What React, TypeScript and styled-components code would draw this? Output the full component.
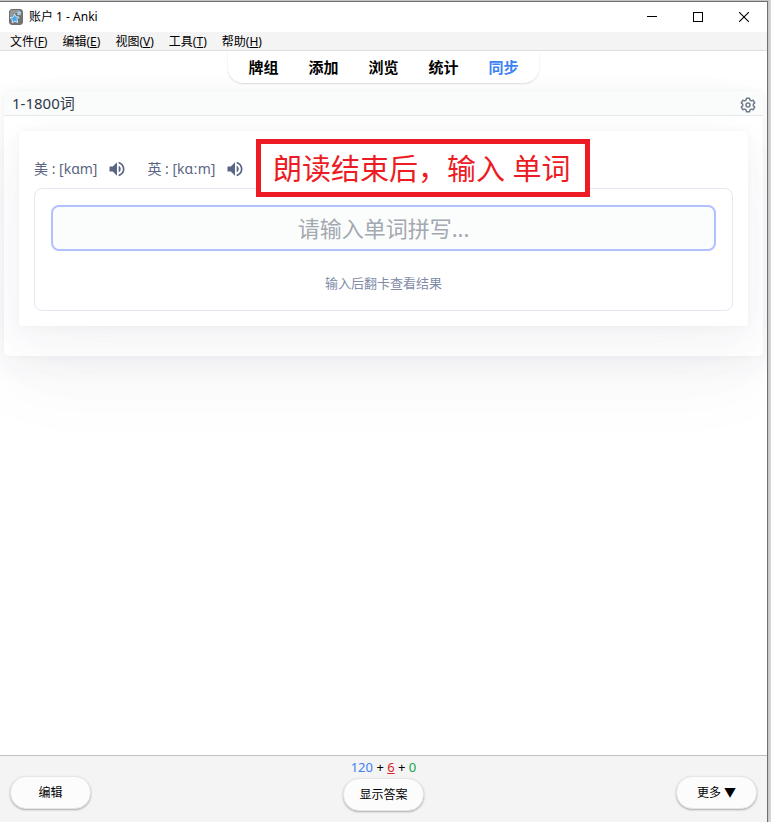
import React from "react";
import styled, { createGlobalStyle, css } from "styled-components";

const GlobalStyle = createGlobalStyle`
  *, *::before, *::after { box-sizing: border-box; }
  body {
    margin: 0;
    background: #cfcfcf;
    font-family: "Noto Sans", "Noto Sans CJK SC", sans-serif;
    color: #000;
  }
  button, input { font: inherit; color: inherit; }
`;

const Desktop = styled.div`
  min-height: 100vh;
  display: flex;
  padding: 1px 3px 0 0;
  background: linear-gradient(to left, #dcdcdc, #c4c4c4 3px);
`;

const AppWindow = styled.div`
  flex: 1;
  min-width: 0;
  display: flex;
  flex-direction: column;
  border: solid #707070;
  border-width: 1px 1px 0 0;
  background: #fff;
  overflow: hidden;
`;

const TitleBar = styled.header`
  display: flex;
  align-items: center;
  height: 30px;
  padding-left: 9px;
  background: #fff;
`;

const WindowTitle = styled.h1`
  flex: 1;
  margin: 0 0 0 6px;
  font-size: 12px;
  line-height: 30px;
  font-weight: 400;
`;

const CaptionButton = styled.button`
  display: grid;
  place-items: center;
  width: 46px;
  height: 30px;
  padding: 0;
  border: 0;
  background: none;
`;

const MenuBar = styled.nav`
  display: flex;
  align-items: flex-start;
  gap: 15px;
  height: 19px;
  padding-left: 10px;
  background: #f4f4f4;
  border-bottom: 1px solid #dfdfdf;
`;

const MenuItem = styled.button`
  padding: 0;
  border: 0;
  background: none;
  font-size: 12px;
  line-height: 20px;
  white-space: nowrap;
`;

const Toolbar = styled.nav`
  position: relative;
  align-self: center;
  display: flex;
  gap: 30px;
  height: 32px;
  padding: 0 20px;
  border-radius: 0 0 15px 15px;
  background: #fff;
  box-shadow: 0 1px 2px rgba(0, 0, 0, 0.14);
  clip-path: inset(0 -4px -4px -4px);
`;

const ToolbarLink = styled.a<{ $active?: boolean }>`
  font-size: 15px;
  line-height: 33px;
  font-weight: 700;
  text-decoration: none;
  color: ${(p) => (p.$active ? "#3b82f6" : "#000")};
`;

const Page = styled.main`
  flex: 1;
  padding: 8px 4px;
`;

const softShadow = css`
  box-shadow:
    0 0 6px rgba(50, 60, 93, 0.03),
    0 30px 80px rgba(50, 60, 93, 0.03),
    0 8px 30px rgba(50, 60, 93, 0.05);
`;

const DeckCard = styled.section`
  border-radius: 4px;
  background: #fff;
  ${softShadow}
`;

const DeckHeader = styled.div`
  display: flex;
  align-items: center;
  justify-content: space-between;
  height: 25px;
  padding: 0 7px 0 8px;
  border-bottom: 1px solid #e4e7ed;
  border-radius: 4px 4px 0 0;
  background: #fafcfc;
`;

const DeckName = styled.h2`
  margin: 0;
  font-size: 15px;
  line-height: 24px;
  font-weight: 400;
  color: #303846;
`;

const IconButton = styled.button`
  display: grid;
  place-items: center;
  padding: 0;
  border: 0;
  background: none;
`;

const SettingsButton = styled(IconButton)`
  padding-top: 4px;
  color: #70798a;
`;

const DeckBody = styled.div`
  padding: 15px 15px 30px;
`;

const Card = styled.article`
  padding: 24px 15px 15px;
  border-radius: 4px;
  background: #fff;
  ${softShadow}
`;

const Phonetics = styled.div`
  position: relative;
  display: flex;
  align-items: flex-start;
  gap: 20px;
  height: 33px;
  font-size: 14px;
  line-height: 28px;
  color: #5a6583;
`;

const Phonetic = styled.div`
  display: flex;
  align-items: center;
  gap: 10px;
  white-space: nowrap;
`;

const Callout = styled.div`
  position: absolute;
  left: 222px;
  top: -16px;
  padding: 1px 14px 0 12px;
  border: 5px solid #ed1c24;
  background: #fff;
  font-size: 29px;
  line-height: 47px;
  color: #ed1c24;
  white-space: nowrap;
`;

const AnswerPanel = styled.div`
  padding: 16px;
  border: 1px solid #e6e7f2;
  border-radius: 8px;
`;

const AnswerInput = styled.input`
  display: block;
  width: 100%;
  height: 46px;
  padding: 0 8px;
  border: 2px solid #b4c0fb;
  border-radius: 8px;
  outline: 0;
  background: #fbfdfc;
  font-size: 22px;
  text-align: center;
  color: #303846;
  &::placeholder { color: #a3a8b1; opacity: 1; }
`;

const Hint = styled.p`
  margin: 22px 0 0;
  padding-bottom: 1px;
  font-size: 13px;
  line-height: 20px;
  text-align: center;
  color: #7f8ba8;
`;

const BottomBar = styled.footer`
  display: grid;
  grid-template-columns: 1fr auto 1fr;
  align-items: start;
  height: 67px;
  padding: 0 10px;
  border-top: 1px solid #bfbfbf;
  background: #f4f4f4;
`;

const Side = styled.div<{ $end?: boolean }>`
  display: flex;
  justify-content: ${(p) => (p.$end ? "flex-end" : "flex-start")};
  padding-top: 20px;
`;

const Center = styled.div`
  display: flex;
  flex-direction: column;
  align-items: center;
`;

const Counts = styled.div`
  font-size: 13px;
  line-height: 22px;
`;

const Count = styled.span<{ $color: string }>`
  color: ${(p) => p.$color};
`;

const PillButton = styled.button`
  width: 81px;
  height: 33px;
  padding: 0;
  border: 1px solid #e6e6e6;
  border-radius: 16px;
  background: #fcfcfc;
  box-shadow: 0 1px 2px rgba(0, 0, 0, 0.3);
  font-size: 12px;
  line-height: 30px;
`;

const menus = [
  ["文件", "F"],
  ["编辑", "E"],
  ["视图", "V"],
  ["工具", "T"],
  ["帮助", "H"],
];

const links = ["牌组", "添加", "浏览", "统计", "同步"];

const phonetics = [
  ["美", "[kɑm]"],
  ["英", "[kɑːm]"],
];

function AppIcon() {
  return (
    <svg width="14" height="16" viewBox="0 0 14 16" aria-hidden="true">
      <rect x="0.5" y="0.5" width="13" height="15" rx="2.5" fill="#747474" stroke="#6e6e6e" />
      <path d="M1 3Q1 1 3 1H11L1 9Z" fill="#969696" />
      <path d="M5.6 5.2l1.5 2.6 3 .3-2 2.3.6 3-2.9-1.1-2.6 1.5.1-3-2.2-2.1 3-.6z" fill="#4aa9ee" stroke="#d9efff" strokeWidth="0.9" />
      <path d="M10 1.8l.8 1.3 1.5.2-1 1.2.2 1.5-1.4-.6-1.4.6.2-1.5-.9-1.1 1.4-.3z" fill="#9bd0f5" stroke="#dceffc" strokeWidth="0.4" />
    </svg>
  );
}

function SpeakerIcon() {
  return (
    <svg width="20" height="20" viewBox="0 0 24 24" fill="currentColor" aria-hidden="true">
      <path d="M3 9v6h4l5 5V4L7 9H3zm13.5 3c0-1.77-1.02-3.29-2.5-4.03v8.05c1.48-.73 2.5-2.25 2.5-4.02zM14 3.23v2.06c2.89.86 5 3.54 5 6.71s-2.11 5.85-5 6.71v2.06c4.01-.91 7-4.49 7-8.77s-2.99-7.86-7-8.77z" />
    </svg>
  );
}

function GearIcon() {
  return (
    <svg width="16" height="16" viewBox="0 0 16 16" fill="none" stroke="currentColor" strokeWidth="1.5" strokeLinejoin="round" aria-hidden="true">
      <path d="M6.5 1.2h3l.5 1.9 1.3.8 1.9-.6 1.5 2.6-1.4 1.4v1.4l1.4 1.4-1.5 2.6-1.9-.6-1.3.8-.5 1.9h-3L6 12.9l-1.3-.8-1.9.6-1.5-2.6 1.4-1.4V7.3L1.3 5.9l1.5-2.6 1.9.6L6 3.1z" />
      <circle cx="8" cy="8" r="2" />
    </svg>
  );
}

export default function App() {
  return (
    <>
      <GlobalStyle />
      <Desktop>
        <AppWindow>
          <TitleBar>
            <AppIcon />
            <WindowTitle>账户 1 - Anki</WindowTitle>
            <CaptionButton aria-label="最小化">
              <svg width="10" height="10" stroke="#000" shapeRendering="crispEdges">
                <path d="M0 4.5H10" />
              </svg>
            </CaptionButton>
            <CaptionButton aria-label="最大化">
              <svg width="10" height="10" fill="none" stroke="#000" shapeRendering="crispEdges">
                <path d="M.5.5h9v9h-9z" />
              </svg>
            </CaptionButton>
            <CaptionButton aria-label="关闭">
              <svg width="10" height="10" stroke="#000" strokeWidth="1.1">
                <path d="M0 0L10 10M10 0L0 10" />
              </svg>
            </CaptionButton>
          </TitleBar>
          <MenuBar>
            {menus.map(([label, key]) => (
              <MenuItem key={key}>
                {label}(<u>{key}</u>)
              </MenuItem>
            ))}
          </MenuBar>
          <Toolbar>
            {links.map((label) => (
              <ToolbarLink key={label} href="#" $active={label === "同步"}>
                {label}
              </ToolbarLink>
            ))}
          </Toolbar>
          <Page>
            <DeckCard>
              <DeckHeader>
                <DeckName>1-1800词</DeckName>
                <SettingsButton aria-label="设置">
                  <GearIcon />
                </SettingsButton>
              </DeckHeader>
              <DeckBody>
                <Card>
                  <Phonetics>
                    {phonetics.map(([region, ipa]) => (
                      <Phonetic key={region}>
                        <span>
                          {region} : {ipa}
                        </span>
                        <IconButton aria-label={`${region}音`}>
                          <SpeakerIcon />
                        </IconButton>
                      </Phonetic>
                    ))}
                    <Callout>朗读结束后，输入 单词</Callout>
                  </Phonetics>
                  <AnswerPanel>
                    <AnswerInput type="text" aria-label="单词拼写" placeholder="请输入单词拼写..." />
                    <Hint>输入后翻卡查看结果</Hint>
                  </AnswerPanel>
                </Card>
              </DeckBody>
            </DeckCard>
          </Page>
          <BottomBar>
            <Side>
              <PillButton>编辑</PillButton>
            </Side>
            <Center>
              <Counts>
                <Count $color="#3b82f6">120</Count> + <Count $color="#dc2626"><u>6</u></Count> +{" "}
                <Count $color="#16a34a">0</Count>
              </Counts>
              <PillButton>显示答案</PillButton>
            </Center>
            <Side $end>
              <PillButton>更多 ▼</PillButton>
            </Side>
          </BottomBar>
        </AppWindow>
      </Desktop>
    </>
  );
}
